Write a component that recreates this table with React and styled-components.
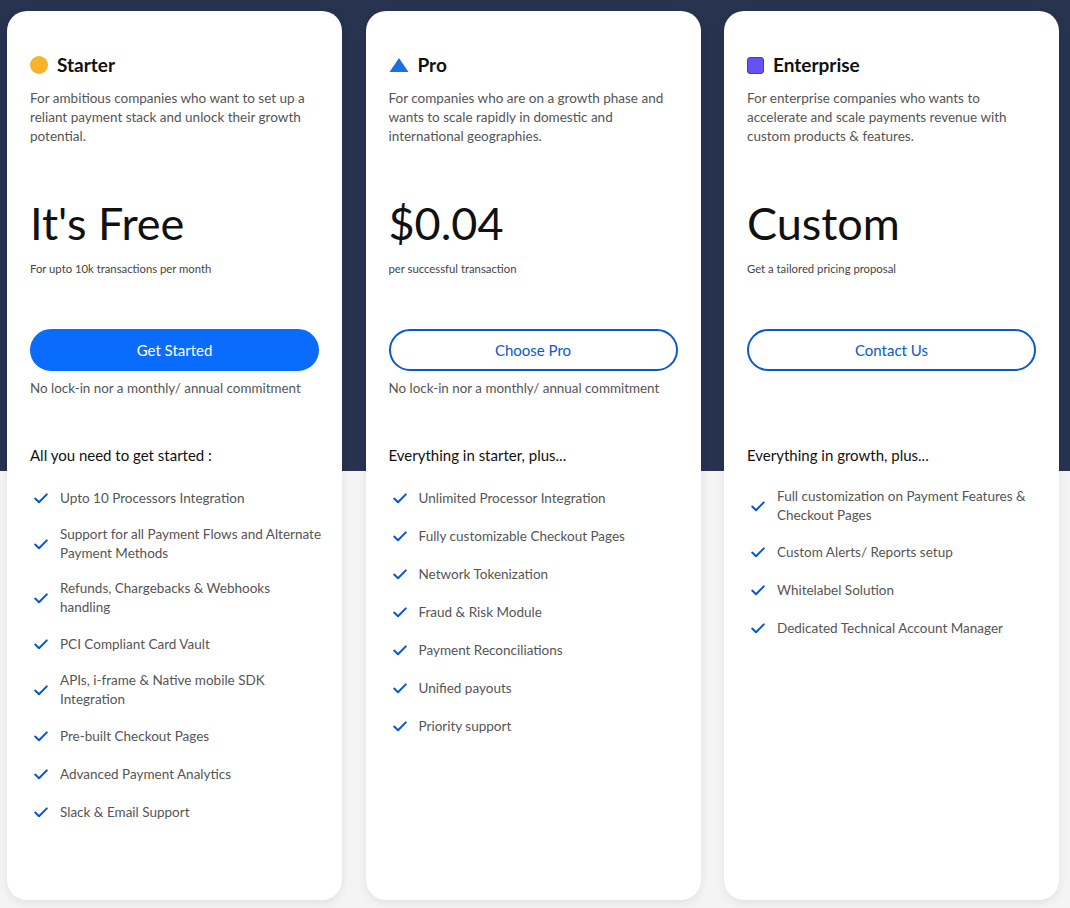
import React from "react";
import styled, { createGlobalStyle } from "styled-components";

const GlobalStyle = createGlobalStyle`
  html, body { margin: 0; padding: 0; }
  body {
    font-family: "Lato", "Liberation Sans", sans-serif;
    background: #f4f4f5;
    -webkit-font-smoothing: antialiased;
  }
`;

const Page = styled.div`
  width: 1070px;
  min-height: 908px;
  box-sizing: border-box;
  padding: 11px 0 0 7px;
  background: linear-gradient(to bottom, #27334f 0, #27334f 471px, #f4f4f5 471px, #f4f4f5 100%);
`;

const Grid = styled.div`
  display: grid;
  grid-template-columns: repeat(3, 335px);
  column-gap: 23.5px;
`;

const Card = styled.div`
  background: #ffffff;
  border-radius: 20px;
  min-height: 889px;
  box-sizing: border-box;
  padding: 42px 23px 40px;
  box-shadow: 0 3px 10px rgba(0, 0, 0, 0.08);
  display: flex;
  flex-direction: column;
`;

const Header = styled.div`
  display: flex;
  align-items: center;
  gap: 9px;
  height: 24px;
`;

const Title = styled.h2`
  margin: 0;
  font-size: 19px;
  font-weight: 700;
  color: #111;
  line-height: 24px;
`;

const Description = styled.p`
  margin: 12px 0 0;
  font-size: 13.5px;
  line-height: 19px;
  color: #555;
`;

const Price = styled.div`
  margin-top: 50px;
  font-size: 45px;
  line-height: 55px;
  font-weight: 400;
  color: #111;
`;

const PriceNote = styled.div`
  margin-top: 10px;
  font-size: 11.3px;
  line-height: 16px;
  color: #444;
`;

const Button = styled.button`
  margin-top: 52px;
  height: 42px;
  width: 100%;
  border-radius: 21px;
  font-family: inherit;
  font-size: 15px;
  cursor: pointer;
  border: 2px solid ${(p) => (p.$primary ? "#0a6bff" : "#0a58d6")};
  background: ${(p) => (p.$primary ? "#0a6bff" : "#ffffff")};
  color: ${(p) => (p.$primary ? "#ffffff" : "#0a58d0")};
`;

const Commitment = styled.div`
  margin-top: 8px;
  font-size: 13.4px;
  line-height: 19px;
  color: #555;
  min-height: 19px;
`;

const ListTitle = styled.h3`
  margin: 46px 0 0;
  font-size: 15px;
  line-height: 22px;
  font-weight: 400;
  color: #111;
`;

const List = styled.ul`
  list-style: none;
  margin: 13px -2px 0 0;
  padding: 0;
`;

const Item = styled.li`
  display: flex;
  align-items: center;
  gap: 8px;
  padding: 8px 0;
  font-size: 13.5px;
  line-height: 19px;
  color: #555;
`;

const CheckBox = styled.span`
  flex: 0 0 22px;
  height: 22px;
  display: flex;
  align-items: center;
  justify-content: center;
`;

const Text = styled.span`
  min-height: 22px;
  display: flex;
  align-items: center;
`;

const Dot = styled.span`
  width: 18px;
  height: 18px;
  border-radius: 50%;
  background: #f8b32a;
  flex: 0 0 auto;
`;

const Square = styled.span`
  width: 17px;
  height: 17px;
  border-radius: 3px;
  background: #6353f4;
  border: 1px solid #4636cf;
  box-sizing: border-box;
  flex: 0 0 auto;
`;

const Check = () => (
  <svg width="14" height="11" viewBox="0 0 14 11" fill="none">
    <path d="M1.2 5.6 L5 9.2 L12.8 1.4" stroke="#0a56cf" strokeWidth="2" strokeLinecap="round" strokeLinejoin="round" />
  </svg>
);

const Triangle = () => (
  <svg width="20" height="16" viewBox="0 0 20 16">
    <polygon points="10,1 19.5,15 0.5,15" fill="#1b6fe6" />
  </svg>
);

const plans = [
  {
    name: "Starter",
    icon: <Dot />,
    desc: "For ambitious companies who want to set up a reliant payment stack and unlock their growth potential.",
    price: "It's Free",
    note: "For upto 10k transactions per month",
    cta: "Get Started",
    primary: true,
    commitment: "No lock-in nor a monthly/ annual commitment",
    listTitle: "All you need to get started :",
    features: [
      "Upto 10 Processors Integration",
      "Support for all Payment Flows and Alternate Payment Methods",
      "Refunds, Chargebacks & Webhooks handling",
      "PCI Compliant Card Vault",
      "APIs, i-frame & Native mobile SDK Integration",
      "Pre-built Checkout Pages",
      "Advanced Payment Analytics",
      "Slack & Email Support",
    ],
  },
  {
    name: "Pro",
    icon: <Triangle />,
    desc: "For companies who are on a growth phase and wants to scale rapidly in domestic and international geographies.",
    price: "$0.04",
    note: "per successful transaction",
    cta: "Choose Pro",
    commitment: "No lock-in nor a monthly/ annual commitment",
    listTitle: "Everything in starter, plus...",
    features: [
      "Unlimited Processor Integration",
      "Fully customizable Checkout Pages",
      "Network Tokenization",
      "Fraud & Risk Module",
      "Payment Reconciliations",
      "Unified payouts",
      "Priority support",
    ],
  },
  {
    name: "Enterprise",
    icon: <Square />,
    desc: "For enterprise companies who wants to accelerate and scale payments revenue with custom products & features.",
    price: "Custom",
    note: "Get a tailored pricing proposal",
    cta: "Contact Us",
    commitment: "",
    listTitle: "Everything in growth, plus...",
    features: [
      "Full customization on Payment Features & Checkout Pages",
      "Custom Alerts/ Reports setup",
      "Whitelabel Solution",
      "Dedicated Technical Account Manager",
    ],
  },
];

export default function App() {
  return (
    <>
      <GlobalStyle />
      <Page>
        <Grid>
          {plans.map((p) => (
            <Card key={p.name}>
              <Header>
                {p.icon}
                <Title>{p.name}</Title>
              </Header>
              <Description>{p.desc}</Description>
              <Price>{p.price}</Price>
              <PriceNote>{p.note}</PriceNote>
              <Button $primary={p.primary}>{p.cta}</Button>
              <Commitment>{p.commitment}</Commitment>
              <ListTitle>{p.listTitle}</ListTitle>
              <List>
                {p.features.map((f) => (
                  <Item key={f}>
                    <CheckBox>
                      <Check />
                    </CheckBox>
                    <Text>{f}</Text>
                  </Item>
                ))}
              </List>
            </Card>
          ))}
        </Grid>
      </Page>
    </>
  );
}
